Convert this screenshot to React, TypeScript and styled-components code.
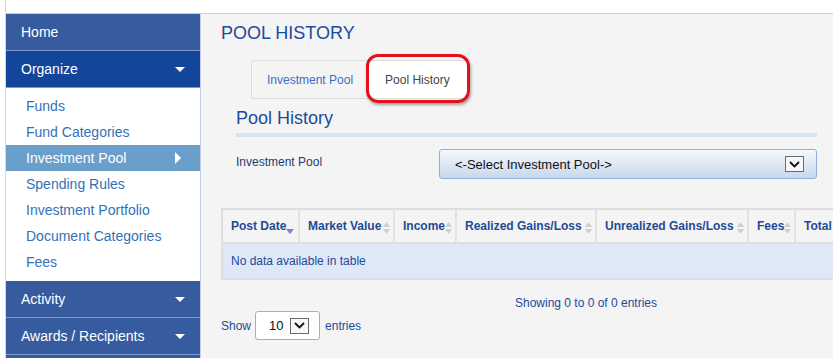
import React from 'react';
import styled, { createGlobalStyle } from 'styled-components';

const GlobalStyle = createGlobalStyle`
  * { box-sizing: border-box; }
  html, body { margin: 0; padding: 0; background: #fff; }
  body { font-family: "Liberation Sans", Arial, sans-serif; overflow: hidden; }
`;

const Page = styled.div`
  margin-left: 5px;
  border-left: 1px solid #cfd9e7;
  height: 358px;
  display: flex;
  flex-direction: column;
`;

const TopBar = styled.div`
  height: 14px;
  flex: none;
  border-bottom: 1px solid #c9d4e1;
  background: #fff;
`;

const Body = styled.div`
  flex: 1;
  display: flex;
  min-height: 0;
`;

const Sidebar = styled.nav`
  width: 195px;
  flex: none;
  border-right: 1px solid #c3d2e9;
  background: #fff;
  overflow: hidden;
`;

const NavItem = styled.div<{ $active?: boolean }>`
  height: 37px;
  border-bottom: 1px solid #7e9acb;
  background: ${({ $active }) => ($active ? '#13459a' : '#365b9f')};
  color: #fff;
  font-size: 14px;
  line-height: 36px;
  padding: 0 15px;
  display: flex;
  align-items: center;
  justify-content: space-between;
`;

const Caret = styled.span`
  width: 0;
  height: 0;
  border-left: 5px solid transparent;
  border-right: 5px solid transparent;
  border-top: 5px solid #fff;
`;

const SubMenu = styled.ul`
  list-style: none;
  margin: 0;
  padding: 5px 0 6px;
`;

const SubItem = styled.li<{ $selected?: boolean }>`
  height: 26px;
  line-height: 26px;
  font-size: 14px;
  padding: 0 20px;
  color: ${({ $selected }) => ($selected ? '#fff' : '#3471b6')};
  background: ${({ $selected }) => ($selected ? '#6a9ecb' : 'transparent')};
  display: flex;
  align-items: center;
  justify-content: space-between;
`;

const RightArrow = styled.span`
  width: 0;
  height: 0;
  border-top: 6px solid transparent;
  border-bottom: 6px solid transparent;
  border-left: 6px solid #fff;
  margin-right: -1px;
`;

const Main = styled.main`
  flex: 1;
  background: #f4f4f4;
  padding: 8px 16px 0 20px;
  overflow: hidden;
`;

const Title = styled.h1`
  margin: 0;
  font-size: 18px;
  line-height: 22px;
  font-weight: normal;
  color: #1d4b9b;
`;

const Tabs = styled.ul`
  list-style: none;
  margin: 16px 0 0 30px;
  padding: 0;
  display: flex;
`;

const Tab = styled.li<{ $current?: boolean }>`
  position: relative;
  height: 39px;
  line-height: 38px;
  font-size: 12px;
  border: 1px solid #dcdcdc;
  border-left-width: ${({ $current }) => ($current ? 0 : 1)}px;
  background: ${({ $current }) => ($current ? '#fff' : '#f4f4f4')};
  color: ${({ $current }) => ($current ? '#444' : '#3a6fc4')};
  padding: ${({ $current }) => ($current ? '0 17px 0 16px' : '0 15px')};
  border-radius: 3px 3px 0 0;
`;

const Callout = styled.span`
  position: absolute;
  top: -7px;
  left: -3px;
  right: -3px;
  bottom: -5px;
  border: 3px solid #e3111a;
  border-radius: 12px;
  box-shadow: 1px 2px 3px rgba(0, 0, 0, 0.35);
  pointer-events: none;
`;

const Panel = styled.section`
  margin: 8px 0 0 15px;
`;

const SubTitle = styled.h2`
  margin: 0;
  font-size: 18px;
  line-height: 22px;
  font-weight: normal;
  color: #1d4b9b;
`;

const Rule = styled.div`
  height: 4px;
  background: #d9e3f1;
  margin-top: 4px;
`;

const FormRow = styled.div`
  margin-top: 12px;
  display: flex;
  align-items: center;
`;

const Label = styled.label`
  width: 203px;
  font-size: 12px;
  color: #1f3c70;
  margin-top: -5px;
`;

const Select = styled.div`
  flex: 1;
  height: 30px;
  border: 1px solid #94afd6;
  border-radius: 3px;
  background: linear-gradient(#f6f9fd, #c7d7ec);
  display: flex;
  align-items: center;
  justify-content: space-between;
  padding: 0 12px 0 15px;
  font-size: 13px;
  color: #111;
`;

const ArrowBox = styled.span`
  width: 19px;
  height: 16px;
  border: 1px solid #6b6b6b;
  background: #f7f7f7;
  display: flex;
  align-items: center;
  justify-content: center;
`;

const Grid = styled.table`
  margin-top: 29px;
  border-collapse: separate;
  border-spacing: 0;
  table-layout: fixed;
  width: 660px;
  border: 2px solid #dedede;
`;

const Th = styled.th<{ $w: number }>`
  width: ${({ $w }) => $w}px;
  height: 34px;
  padding: 0 10px 0 8px;
  text-align: left;
  font-size: 12px;
  font-weight: bold;
  color: #1f4a99;
  white-space: nowrap;
  position: relative;
  border-right: 2px solid #e2e2e2;
  border-bottom: 2px solid #dedede;
  background: #f4f4f4;
`;

const SortIcon = styled.svg`
  position: absolute;
  right: 3px;
  top: 11px;
`;

const Td = styled.td`
  height: 34px;
  padding: 0 8px;
  font-size: 12px;
  color: #1f4a99;
  background: #dfe8f6;
`;

const Info = styled.div`
  margin-top: 16px;
  text-align: center;
  font-size: 12px;
  color: #1f4a99;
  width: 730px;
`;

const LengthRow = styled.div`
  margin-top: 1px;
  display: flex;
  align-items: center;
  gap: 4px;
  font-size: 12px;
  color: #1f4a99;
`;

const SmallSelect = styled.div`
  width: 65px;
  height: 29px;
  border: 1px solid #90b1e3;
  border-radius: 3px;
  background: #fff;
  display: flex;
  align-items: center;
  justify-content: space-between;
  padding: 0 10px 0 13px;
  font-size: 13px;
  color: #111;
  margin-right: 1px;
`;

const Chevron = () => (
  <svg width="11" height="7" viewBox="0 0 11 7">
    <polyline points="1,1 5.5,5.5 10,1" fill="none" stroke="#111" strokeWidth="1.8" />
  </svg>
);

const Sort = ({ desc }: { desc?: boolean }) =>
  desc ? (
    <SortIcon width="8" height="14" viewBox="0 0 8 14" style={{ right: 4, top: 14 }}>
      <polygon points="0,5 8,5 4,10" fill="#7c80dc" />
    </SortIcon>
  ) : (
    <SortIcon width="7" height="14" viewBox="0 0 7 14">
      <polygon points="3.5,1 7,6 0,6" fill="#cfcfcf" />
      <polygon points="0,8 7,8 3.5,13" fill="#cfcfcf" />
    </SortIcon>
  );

const columns = [
  { title: 'Post Date', w: 77 },
  { title: 'Market Value', w: 95 },
  { title: 'Income', w: 62 },
  { title: 'Realized Gains/Loss', w: 140 },
  { title: 'Unrealized Gains/Loss', w: 152 },
  { title: 'Fees', w: 47 },
  { title: 'Total', w: 85 },
];

const subItems = [
  'Funds',
  'Fund Categories',
  'Investment Pool',
  'Spending Rules',
  'Investment Portfolio',
  'Document Categories',
  'Fees',
];

export default function App() {
  return (
    <>
      <GlobalStyle />
      <Page>
        <TopBar />
        <Body>
          <Sidebar>
            <NavItem>Home</NavItem>
            <NavItem $active>
              Organize <Caret />
            </NavItem>
            <SubMenu>
              {subItems.map((s) => (
                <SubItem key={s} $selected={s === 'Investment Pool'}>
                  {s}
                  {s === 'Investment Pool' && <RightArrow />}
                </SubItem>
              ))}
            </SubMenu>
            <NavItem>
              Activity <Caret />
            </NavItem>
            <NavItem>
              Awards / Recipients <Caret />
            </NavItem>
            <NavItem />
          </Sidebar>
          <Main>
            <Title>POOL HISTORY</Title>
            <Tabs>
              <Tab>Investment Pool</Tab>
              <Tab $current>
                Pool History
                <Callout />
              </Tab>
            </Tabs>
            <Panel>
              <SubTitle>Pool History</SubTitle>
              <Rule />
              <FormRow>
                <Label>Investment Pool</Label>
                <Select>
                  &lt;-Select Investment Pool-&gt;
                  <ArrowBox>
                    <Chevron />
                  </ArrowBox>
                </Select>
              </FormRow>
            </Panel>
            <Grid>
              <thead>
                <tr>
                  {columns.map((c, i) => (
                    <Th key={c.title} $w={c.w}>
                      {c.title}
                      {i < columns.length - 1 && <Sort desc={i === 0} />}
                    </Th>
                  ))}
                </tr>
              </thead>
              <tbody>
                <tr>
                  <Td colSpan={columns.length}>No data available in table</Td>
                </tr>
              </tbody>
            </Grid>
            <Info>Showing 0 to 0 of 0 entries</Info>
            <LengthRow>
              Show
              <SmallSelect>
                10
                <ArrowBox>
                  <Chevron />
                </ArrowBox>
              </SmallSelect>
              entries
            </LengthRow>
          </Main>
        </Body>
      </Page>
    </>
  );
}
